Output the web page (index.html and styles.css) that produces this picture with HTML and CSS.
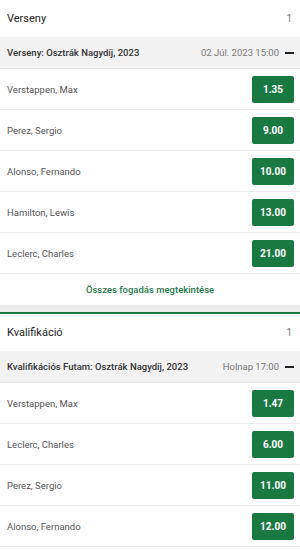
FILE: index.html
```html
<!DOCTYPE html>
<html>
<head>
<meta charset="utf-8">
<link rel="stylesheet" href="styles.css">
</head>
<body>
<section class="market">
  <div class="market-head"><span>Verseny</span><span class="count">1</span></div>
  <div class="event-head"><span class="event-title">Verseny: Osztrák Nagydíj, 2023</span><span class="event-time">02 Júl. 2023 15:00</span><span class="minus"></span></div>
  <div class="row"><span class="name">Verstappen, Max</span><span class="odd">1.35</span></div>
  <div class="row"><span class="name">Perez, Sergio</span><span class="odd">9.00</span></div>
  <div class="row"><span class="name">Alonso, Fernando</span><span class="odd">10.00</span></div>
  <div class="row"><span class="name">Hamilton, Lewis</span><span class="odd">13.00</span></div>
  <div class="row"><span class="name">Leclerc, Charles</span><span class="odd">21.00</span></div>
  <div class="more">Összes fogadás megtekintése</div>
</section>
<div class="gap"></div>
<section class="market second">
  <div class="market-head"><span>Kvalifikáció</span><span class="count">1</span></div>
  <div class="event-head"><span class="event-title">Kvalifikációs Futam: Osztrák Nagydíj, 2023</span><span class="event-time">Holnap 17:00</span><span class="minus"></span></div>
  <div class="row"><span class="name">Verstappen, Max</span><span class="odd">1.47</span></div>
  <div class="row"><span class="name">Leclerc, Charles</span><span class="odd">6.00</span></div>
  <div class="row"><span class="name">Perez, Sergio</span><span class="odd">11.00</span></div>
  <div class="row"><span class="name">Alonso, Fernando</span><span class="odd">12.00</span></div>
</section>
</body>
</html>
```
FILE: styles.css
```css
html, body {
  margin: 0;
  padding: 0;
  background: #fff;
  font-family: Roboto, "Liberation Sans", sans-serif;
}
.market {
  background: #fff;
}
.second {
  border-top: 2px solid #1b7a43;
}
.market-head {
  height: 37px;
  display: flex;
  align-items: center;
  justify-content: space-between;
  padding: 0 8px 0 7px;
  font-size: 11px;
  color: #222;
}
.count {
  color: #777;
  font-size: 10px;
}
.event-head {
  height: 31px;
  display: flex;
  align-items: center;
  padding: 0 6px 0 7px;
  background: #f2f2f2;
  border-bottom: 1px solid #e4e4e4;
  font-size: 9.5px;
}
.event-title {
  flex: 1;
  color: #333;
  font-weight: 500;
  white-space: nowrap;
}
.event-time {
  color: #777;
  white-space: nowrap;
}
.minus {
  width: 9px;
  height: 2px;
  background: #222;
  margin-left: 6px;
}
.row {
  height: 40px;
  display: flex;
  align-items: center;
  justify-content: space-between;
  padding: 0 6px 0 7px;
  border-bottom: 1px solid #eaeaea;
}
.name {
  font-size: 9.5px;
  color: #555;
}
.odd {
  width: 42px;
  height: 27px;
  display: flex;
  align-items: center;
  justify-content: center;
  background: #1a7841;
  border-radius: 2px;
  color: #fff;
  font-weight: 700;
  font-size: 10px;
}
.more {
  height: 31px;
  display: flex;
  align-items: center;
  justify-content: center;
  color: #1f7a4c;
  font-size: 9.5px;
  font-weight: 500;
}
.gap {
  height: 7px;
  background: #ececec;
}
```
